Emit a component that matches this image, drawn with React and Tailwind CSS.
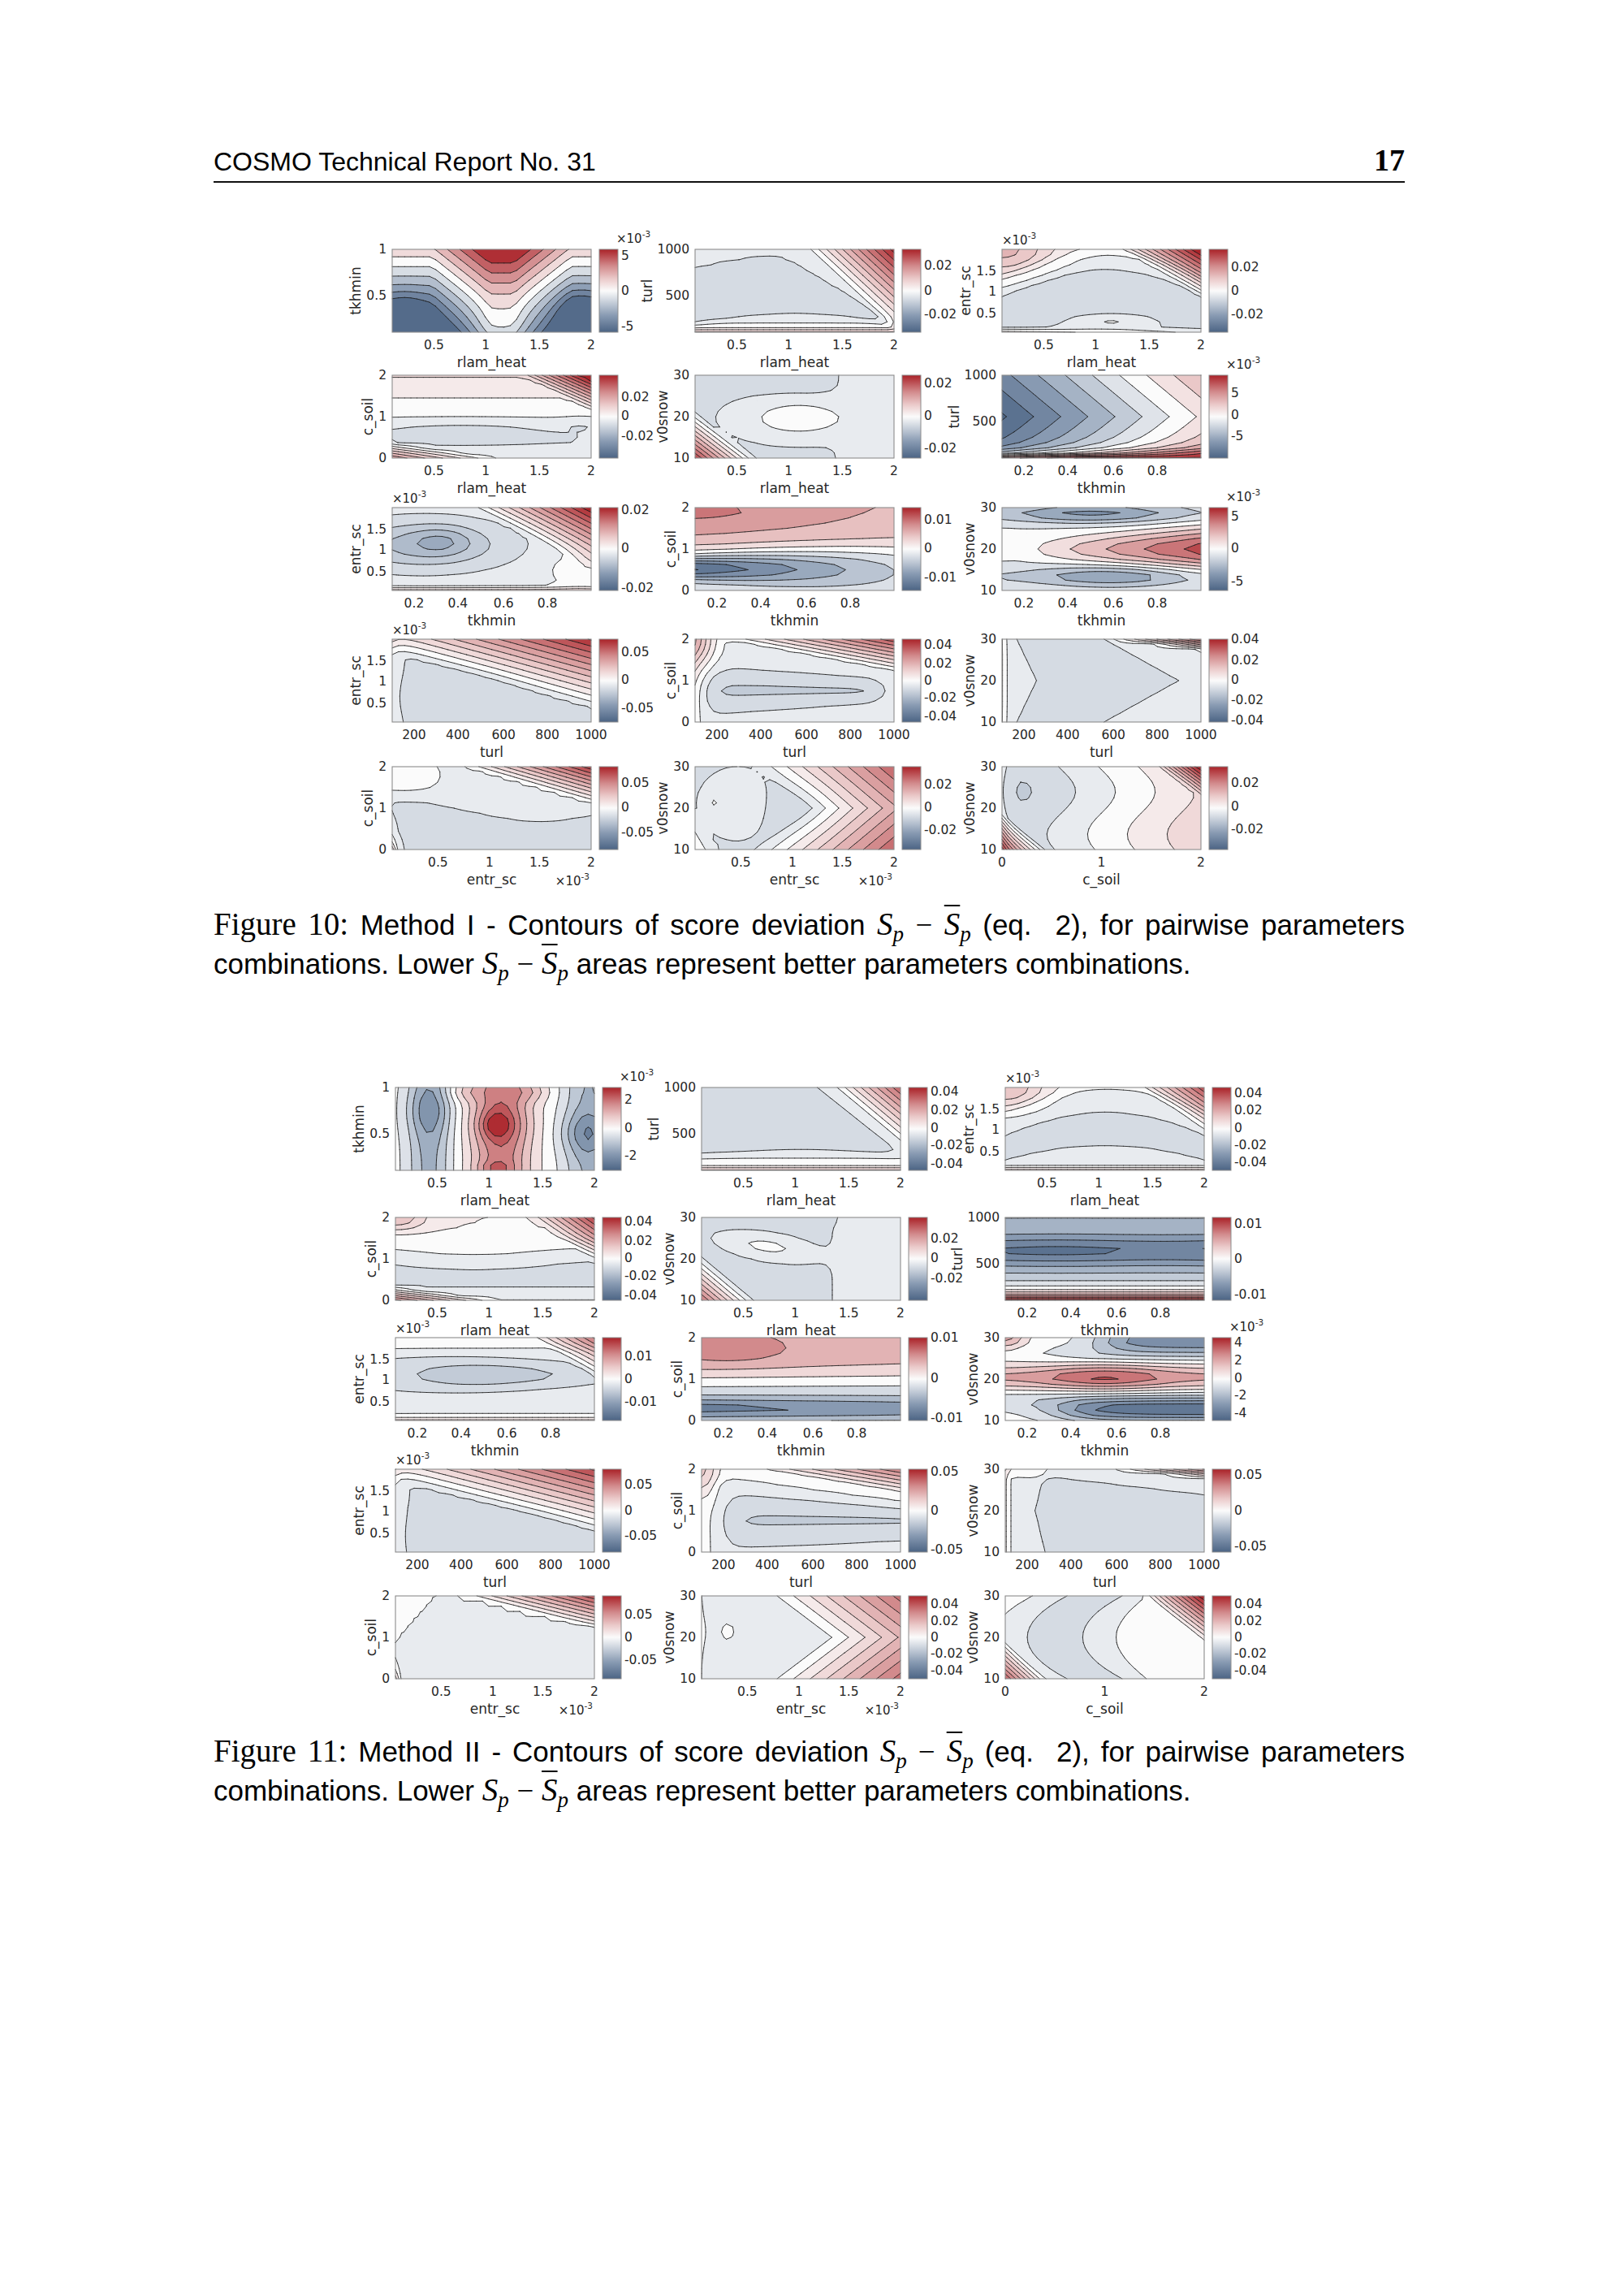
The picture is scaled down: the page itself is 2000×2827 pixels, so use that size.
import React, { useMemo } from 'react';

const P = (x) => (x > 0 ? x : 0);
const S = (x) => 1 / (1 + Math.exp(-x));
const A = Math.abs;
const E = Math.exp;
const G = (u, v, a, b, sa, sb) => E(-(((u - a) / sa) ** 2) - (((v - b) / sb) ** 2));

const STOPS = [
  [-1, [76, 100, 132]],
  [-0.6, [136, 154, 178]],
  [-0.3, [194, 203, 215]],
  [0, [251, 251, 251]],
  [0.3, [234, 200, 200]],
  [0.6, [210, 138, 140]],
  [1, [170, 34, 40]],
];

function cmap(t) {
  const x = Math.max(-1, Math.min(1, t));
  for (let i = 0; i < STOPS.length - 1; i++) {
    const [a, ca] = STOPS[i];
    const [b, cb] = STOPS[i + 1];
    if (x <= b) {
      const k = (x - a) / (b - a);
      const c = ca.map((v, j) => Math.round(v + (cb[j] - v) * k));
      return `rgb(${c[0]},${c[1]},${c[2]})`;
    }
  }
  return 'rgb(170,34,40)';
}

const GRAD = Array.from({ length: 21 }, (_, k) => (
  <stop key={k} offset={k / 20} stopColor={cmap(1 - k / 10)} />
));

function buildContours(f, step, W, H) {
  const nx = 32;
  const ny = 16;
  const N = nx + 1;
  const val = new Array(N * (ny + 1));
  for (let j = 0; j <= ny; j++) {
    for (let i = 0; i <= nx; i++) {
      let t = f(i / nx, j / ny);
      if (!(t > -0.999)) t = -0.999;
      if (t > 0.999) t = 0.999;
      val[j * N + i] = t;
    }
  }
  const X = (i) => (i * W / nx).toFixed(1);
  const Y = (j) => (H - j * H / ny).toFixed(1);
  const levels = [];
  for (let k = -40; k < 40; k++) {
    const Lv = (k + 0.5) * step;
    if (Lv > -0.999 && Lv < 0.999) levels.push(Lv);
  }
  const fills = [{ color: cmap(levels[0] - step / 2), d: `M0 0H${W}V${H}H0Z` }];
  let lines = '';
  const seg = (a, b) => {
    lines += `M${X(a[0])} ${Y(a[1])}L${X(b[0])} ${Y(b[1])}`;
  };
  levels.forEach((Lv, li) => {
    const hi = li + 1 < levels.length ? levels[li + 1] : Lv + step;
    let d = '';
    const rect = (r0, r1, j) => `M${X(r0)} ${Y(j)}H${X(r1)}V${Y(j + 1)}H${X(r0)}Z`;
    for (let j = 0; j < ny; j++) {
      let run = -1;
      for (let i = 0; i < nx; i++) {
        const c0 = val[j * N + i];
        const c1 = val[j * N + i + 1];
        const c2 = val[(j + 1) * N + i + 1];
        const c3 = val[(j + 1) * N + i];
        const h0 = c0 >= Lv, h1 = c1 >= Lv, h2 = c2 >= Lv, h3 = c3 >= Lv;
        if (h0 && h1 && h2 && h3) {
          if (run < 0) run = i;
          continue;
        }
        if (run >= 0) {
          d += rect(run, i, j);
          run = -1;
        }
        if (!h0 && !h1 && !h2 && !h3) continue;
        const Q = [
          [i, j, c0, h0],
          [i + 1, j, c1, h1],
          [i + 1, j + 1, c2, h2],
          [i, j + 1, c3, h3],
        ];
        const pts = [];
        const cr = [];
        for (let k = 0; k < 4; k++) {
          const p = Q[k];
          const q = Q[(k + 1) % 4];
          if (p[3]) pts.push([p[0], p[1]]);
          if (p[3] !== q[3]) {
            const t = (Lv - p[2]) / (q[2] - p[2]);
            const pt = [p[0] + (q[0] - p[0]) * t, p[1] + (q[1] - p[1]) * t];
            pts.push(pt);
            cr.push(pt);
          }
        }
        d += 'M' + pts.map((pt) => X(pt[0]) + ' ' + Y(pt[1])).join('L') + 'Z';
        if (cr.length === 2) seg(cr[0], cr[1]);
        else if (cr.length === 4) {
          const ctr = (c0 + c1 + c2 + c3) / 4;
          if ((ctr >= Lv) === h0) {
            seg(cr[0], cr[1]);
            seg(cr[2], cr[3]);
          } else {
            seg(cr[3], cr[0]);
            seg(cr[1], cr[2]);
          }
        }
      }
      if (run >= 0) d += rect(run, nx, j);
    }
    fills.push({ color: cmap((Lv + hi) / 2), d });
  });
  return { fills, lines };
}

const XAX = {
  rlam: { label: 'rlam_heat', ticks: [['0.5', 0.21], ['1', 0.47], ['1.5', 0.74], ['2', 1]] },
  tkh: { label: 'tkhmin', ticks: [['0.2', 0.11], ['0.4', 0.33], ['0.6', 0.56], ['0.8', 0.78]] },
  turl: { label: 'turl', ticks: [['200', 0.11], ['400', 0.33], ['600', 0.56], ['800', 0.78], ['1000', 1]] },
  entr: { label: 'entr_sc', ticks: [['0.5', 0.23], ['1', 0.49], ['1.5', 0.74], ['2', 1]], exp: true },
  csoil: { label: 'c_soil', ticks: [['0', 0], ['1', 0.5], ['2', 1]] },
};
const YAX = {
  tkh: { label: 'tkhmin', ticks: [['0.5', 0.44], ['1', 1]] },
  turl: { label: 'turl', ticks: [['500', 0.44], ['1000', 1]] },
  entr: { label: 'entr_sc', ticks: [['0.5', 0.23], ['1', 0.49], ['1.5', 0.74]], exp: true },
  csoil: { label: 'c_soil', ticks: [['0', 0], ['1', 0.5], ['2', 1]] },
  v0: { label: 'v0snow', ticks: [['10', 0], ['20', 0.5], ['30', 1]] },
};

const CB3 = (a, p1, p2, p3) => [[a, p1], ['0', p2], ['-' + a, p3]];
const CB5 = (a, b, p) => [[a, p[0]], [b, p[1]], ['0', p[2]], ['-' + b, p[3]], ['-' + a, p[4]]];

const FIG10 = [
  {
    x: XAX.rlam, y: YAX.tkh, step: 0.19, cbExp: true, cb: CB3('5', 0.08, 0.5, 0.93),
    f: (u, v) => {
      const g = 0.3 + Math.min(0.55, 1.9 * P(A(u - 0.55) - 0.06));
      return 1.6 * (v - g) + 0.3 * G(u, v, 0.55, 0, 0.16, 0.3) - 0.35 * G(u, v, 0.06, 0.2, 0.12, 0.25) - 0.35 * G(u, v, 0.95, 0.25, 0.12, 0.25);
    },
  },
  {
    x: XAX.rlam, y: YAX.turl, step: 0.1, cb: CB3('0.02', 0.2, 0.5, 0.78),
    f: (u, v) => {
      const D = 0.74 + 0.14 * Math.sin(Math.PI * Math.min(1, u * 1.25));
      const B = 0.1 + 0.16 * Math.sin(Math.PI * u);
      return -0.13 - 0.1 * S((D - v) / 0.02) * S((1.06 - u - 0.7 * v) / 0.015) * S((v - B) / 0.02) + 2.5 * P(u + 0.45 * v - 1.0) + 0.3 * E(-v / 0.04) + 0.1 * S((0.12 - v) / 0.03);
    },
  },
  {
    x: XAX.rlam, y: YAX.entr, step: 0.1, cb: CB3('0.02', 0.22, 0.5, 0.78),
    f: (u, v) => {
      const ar = 0.45 + 0.32 * (1 - 4 * (u - 0.5) ** 2);
      return -0.2 + 0.12 * S((v - ar) / 0.03) + 0.12 * S((v - ar - 0.2) / 0.03) + 0.1 * G(u, v, 0.55, 0.13, 0.28, 0.11) + 0.1 * G(u, v, 0.55, 0.14, 0.06, 0.025) + 2.6 * P(u + 0.7 * v - 1.3) + 0.35 * G(u, v, 0, 1, 0.25, 0.3) + 0.3 * E(-v / 0.03) * (1 - 0.6 * u);
    },
  },
  {
    x: XAX.rlam, y: YAX.csoil, step: 0.1, cb: CB3('0.02', 0.26, 0.49, 0.74),
    f: (u, v) => 0.4 * (v - 0.6) - 0.1 * G(u, v, 0.35, 0.32, 0.45, 0.12) + 0.14 * S((0.12 - v) / 0.04) + 2.8 * P(u + 0.8 * v - 1.45) + 3.2 * P(0.2 - 0.35 * u - v) - 0.06 * G(u, v, 0.95, 0.4, 0.1, 0.08),
  },
  {
    x: XAX.rlam, y: YAX.v0, step: 0.1, cb: CB3('0.02', 0.1, 0.49, 0.88),
    f: (u, v) => -0.16 + 0.2 * G(u, v, 0.52, 0.48, 0.24, 0.2) - 0.08 * S((v - 0.85 + 0.3 * (u - 0.4) ** 2) / 0.03) * S((0.62 - u) / 0.03) + 0.1 * S((u - 0.82) / 0.05) + 3.4 * P(0.3 - u - 0.55 * v),
  },
  {
    x: XAX.tkh, y: YAX.turl, step: 0.15, cbExp: true, cb: CB3('5', 0.22, 0.48, 0.74),
    f: (u, v) => -1.0 + 1.1 * (u + 0.5 * A(v - 0.5)) + 1.3 * E(-v / 0.06),
  },
  {
    x: XAX.tkh, y: YAX.entr, step: 0.1, cb: CB3('0.02', 0.03, 0.49, 0.97),
    f: (u, v) => -0.1 - 0.3 * G(u, v, 0.15, 0.55, 0.4, 0.28) - 0.12 * G(u, v, 0.25, 0.6, 0.14, 0.16) + 1.9 * P(u + 0.8 * v - 1.2) + 0.3 * E(-v / 0.03) + 0.14 * G(u, v, 0.95, 0.25, 0.15, 0.2),
  },
  {
    x: XAX.tkh, y: YAX.csoil, step: 0.17, cb: CB3('0.01', 0.15, 0.49, 0.84),
    f: (u, v) => 0.58 * S((v - 0.52) / 0.1) * (1 - 0.25 * u) + 0.08 * (v - 0.5) + 0.12 * G(u, v, 0.05, 0.95, 0.3, 0.1) - 0.92 * E(-(((v - 0.27) / (0.14 + 0.12 * u)) ** 2)) * (1 - 0.78 * u) - 0.06,
  },
  {
    x: XAX.tkh, y: YAX.v0, step: 0.17, cbExp: true, cb: CB3('5', 0.11, 0.49, 0.89),
    f: (u, v) => 0.95 * P(u - 0.08) ** 0.85 * E(-(((v - 0.5) / (0.12 + 0.12 * u)) ** 2)) - 0.6 * E(-(((v - 0.93) / 0.12) ** 2)) * (0.3 + 0.7 * E(-(((u - 0.45) / 0.4) ** 2))) - 0.55 * E(-(((v - 0.17) / 0.13) ** 2)) * (0.35 + 0.65 * E(-(((u - 0.55) / 0.35) ** 2))) - 0.05,
  },
  {
    x: XAX.turl, y: YAX.entr, step: 0.1, cb: CB3('0.05', 0.16, 0.49, 0.83),
    f: (u, v) => -0.17 + 1.35 * P(v + 0.66 * u - 0.82) + 0.12 * E(-u / 0.04) - 0.06 * G(u, v, 0.3, 0.3, 0.3, 0.3),
  },
  {
    x: XAX.turl, y: YAX.csoil, step: 0.1, cb: CB5('0.04', '0.02', [0.07, 0.29, 0.5, 0.71, 0.93]),
    f: (u, v) => -0.1 - 0.16 * E(-(((v - 0.38) / (0.26 * (1 - 0.6 * u) + 0.02)) ** 2)) * S((u - 0.06) / 0.02) * S((0.93 - u) / 0.03) + 2.3 * P(v + 0.45 * u - 1.05) + 0.45 * G(u, v, 0, 1, 0.1, 0.35) + 0.12 * E(-u / 0.03),
  },
  {
    x: XAX.turl, y: YAX.v0, step: 0.1, cb: CB5('0.04', '0.02', [0.0, 0.25, 0.49, 0.74, 0.98]),
    f: (u, v) => -0.23 + 0.14 * S((u + 0.75 * A(v - 0.5) - 0.88) / 0.025) + 0.14 * S((0.18 - 0.2 * A(v - 0.5) - u) / 0.02) + 0.15 * E(-u / 0.015) + 6 * P(v + 0.3 * u - 1.16),
  },
  {
    x: XAX.entr, y: YAX.csoil, step: 0.1, cb: CB3('0.05', 0.2, 0.49, 0.79),
    f: (u, v) => -0.17 + 0.1 * S((v - 0.5 - 0.1 * Math.sin(u * 5 + 1) - 0.25 * P(0.3 - u)) / 0.04) + 0.1 * G(u, v, 0.05, 0.9, 0.15, 0.2) + 2.2 * P(v + 0.7 * u - 1.25) + 0.4 * E(-u / 0.02) * E(-v / 0.15),
  },
  {
    x: XAX.entr, y: YAX.v0, step: 0.1, cb: CB3('0.02', 0.22, 0.49, 0.76),
    f: (u, v) => -0.16 + 0.1 * G(u, v, 0.22, 0.55, 0.14, 0.3) + 0.1 * G(u, v, 0.1, 0.57, 0.02, 0.07) + 1.3 * P(u + 0.5 * A(v - 0.5) - 0.55) - 0.05 * G(u, v, 0.5, 0.5, 0.2, 0.3) + 1.6 * P(0.12 - u - 0.25 * v),
  },
  {
    x: XAX.csoil, y: YAX.v0, step: 0.1, cb: CB3('0.02', 0.2, 0.48, 0.75),
    f: (u, v) => -0.3 + 0.5 * (u + 0.07 * Math.sin(6 * v + 0.5)) + 0.2 * E(-u / 0.05) + 4 * P(u + 0.6 * v - 1.38) + 4.5 * P(0.22 - u - 0.5 * v),
  },
];

const FIG11 = [
  {
    x: XAX.rlam, y: YAX.tkh, step: 0.16, cbExp: true, cb: CB3('2', 0.15, 0.49, 0.82),
    f: (u, v) => 0.85 * E(-(((u - 0.53) / 0.15) ** 2)) * (0.75 + 0.25 * E(-(((v - 0.55) / 0.25) ** 2))) + 0.25 * G(u, v, 0.5, 0.55, 0.07, 0.15) + 0.2 * G(u, v, 0.5, 0.03, 0.08, 0.08) - 0.7 * E(-(((u - 0.17) / 0.11) ** 2)) * (0.65 + 0.35 * E(-(((v - 0.72) / 0.3) ** 2))) - 0.75 * E(-(((u - 0.97) / 0.13) ** 2)) * (0.55 + 0.45 * E(-(((v - 0.45) / 0.25) ** 2))) + 0.2 * G(u, v, 0.35, 0.95, 0.1, 0.12) + 0.2 * G(u, v, 0.68, 0.95, 0.1, 0.12),
  },
  {
    x: XAX.rlam, y: YAX.turl, step: 0.1, cb: CB5('0.04', '0.02', [0.05, 0.27, 0.49, 0.7, 0.92]),
    f: (u, v) => -0.13 - 0.1 * S((1.08 - u - 0.53 * v) / 0.02) * S((v - 0.2 - 0.07 * Math.sin(Math.PI * u)) / 0.02) + 2.5 * P(u + 0.5 * v - 1.15) + 0.3 * E(-v / 0.04) + 0.1 * S((0.18 - v) / 0.03),
  },
  {
    x: XAX.rlam, y: YAX.entr, step: 0.1, cb: CB5('0.04', '0.02', [0.07, 0.27, 0.49, 0.7, 0.9]),
    f: (u, v) => {
      const q = 1 - 4 * (u - 0.5) ** 2;
      const a1 = 0.42 + 0.28 * q;
      const a2 = 0.12 + 0.18 * q;
      const a3 = 0.7 + 0.28 * q;
      return -0.1 - 0.1 * S((a1 - v) / 0.025) * S((v - a2) / 0.025) + 0.1 * S((v - a3) / 0.03) + 2.6 * P(u + 0.6 * v - 1.28) + 0.35 * G(u, v, 0, 1, 0.2, 0.25) + 0.3 * E(-v / 0.03);
    },
  },
  {
    x: XAX.rlam, y: YAX.csoil, step: 0.1, cb: CB5('0.04', '0.02', [0.05, 0.28, 0.49, 0.71, 0.94]),
    f: (u, v) => -0.03 - 0.14 * S((0.52 - 0.06 * Math.sin(u * 4) - v) / 0.05) * S((v - 0.08) / 0.04) + 0.08 * S((v - 0.8 + 0.1 * u) / 0.03) + 2.6 * P(u + 0.6 * v - 1.28) + 3.5 * P(0.18 - 0.35 * u - v) + 0.3 * G(u, v, 0, 1, 0.15, 0.15),
  },
  {
    x: XAX.rlam, y: YAX.v0, step: 0.1, cb: CB3('0.02', 0.25, 0.49, 0.74),
    f: (u, v) => {
      const du = u - 0.33;
      const dv = v - 0.65;
      const p = du * 0.86 - dv * 0.51;
      const q = du * 0.51 + dv * 0.86;
      const el = E(-((p / 0.22) ** 2) - ((q / 0.12) ** 2));
      return -0.17 + 0.15 * el + 0.09 * S((u - 0.72) / 0.05) + 3.2 * P(0.26 - u - 0.5 * v) - 0.05 * G(u, v, 0.3, 1, 0.3, 0.1);
    },
  },
  {
    x: XAX.tkh, y: YAX.turl, step: 0.15, cb: CB3('0.01', 0.08, 0.5, 0.93),
    f: (u, v) => -0.45 - 0.45 * E(-(((v - 0.6) / 0.18) ** 2)) * (1 + 0.06 * Math.sin(u * 6)) + 1.5 * E(-v / 0.12) + 0.08 * v,
  },
  {
    x: XAX.tkh, y: YAX.entr, step: 0.1, cb: CB3('0.01', 0.23, 0.5, 0.77),
    f: (u, v) => -0.07 - 0.2 * E(-(((u - 0.45) / 0.48) ** 2) - (((v - 0.55) / (0.2 * (1 - 0.4 * u))) ** 2)) - 0.06 * S((v - 0.3) / 0.05) * S((0.85 - v) / 0.05) + 2.2 * P(u + 0.6 * v - 1.3) + 0.12 * S((v - 0.88) / 0.04) * (1 - u * 0.3) + 0.25 * E(-v / 0.03),
  },
  {
    x: XAX.tkh, y: YAX.csoil, step: 0.2, cb: CB3('0.01', 0.0, 0.49, 0.97),
    f: (u, v) => 0.5 * S((v - 0.55) / 0.09) * (1 - 0.2 * u) + 0.2 * G(u, v, 0.15, 0.85, 0.25, 0.15) - 0.3 * S((0.45 - v) / 0.1) - 0.5 * E(-(((v - 0.15) / 0.12) ** 2)) * (1 - 0.3 * u) + 0.08 * E(-v / 0.03),
  },
  {
    x: XAX.tkh, y: YAX.v0, step: 0.17, cbExp: true, cb: CB5('4', '2', [0.06, 0.27, 0.49, 0.7, 0.91]),
    f: (u, v) => 0.8 * E(-(((v - 0.52) / 0.15) ** 2)) * (0.55 + 0.45 * E(-(((u - 0.5) / 0.3) ** 2))) - 0.75 * E(-(((v - 0.97) / 0.14) ** 2)) * S((u - 0.5) / 0.08) - 0.85 * E(-(((v - 0.12) / 0.14) ** 2)) * S((u - 0.3) / 0.1) - 0.2 * E(-(((v - 0.25) / 0.12) ** 2)) + 0.5 * G(u, v, 0, 1, 0.1, 0.12) - 0.2 * E(-(((v - 0.8) / 0.1) ** 2)) * S((u - 0.2) / 0.1),
  },
  {
    x: XAX.turl, y: YAX.entr, step: 0.1, cb: CB3('0.05', 0.19, 0.5, 0.8),
    f: (u, v) => -0.17 + 1.35 * P(v + 0.62 * u - 0.85) + 0.12 * E(-u / 0.04) - 0.06 * G(u, v, 0.5, 0.2, 0.4, 0.3),
  },
  {
    x: XAX.turl, y: YAX.csoil, step: 0.1, cb: CB3('0.05', 0.03, 0.5, 0.97),
    f: (u, v) => -0.02 - 0.12 * S((0.9 - 0.35 * u - v) / 0.04) * S((u - 0.07) / 0.02) - 0.12 * E(-(((v - 0.38) / (0.22 * (1 - 0.3 * u))) ** 2)) * S((u - 0.15) / 0.03) + 2.2 * P(v + 0.4 * u - 1.1) + 0.3 * G(u, v, 0, 1, 0.08, 0.3),
  },
  {
    x: XAX.turl, y: YAX.v0, step: 0.1, cb: CB3('0.05', 0.07, 0.5, 0.93),
    f: (u, v) => -0.22 + 0.14 * S((0.15 - u + 0.1 * A(v - 0.5)) / 0.02) + 0.12 * S((v + 0.28 * u - 0.96) / 0.025) + 0.15 * E(-u / 0.015) + 5.5 * P(v + 0.25 * u - 1.13),
  },
  {
    x: XAX.entr, y: YAX.csoil, step: 0.1, cb: CB3('0.05', 0.23, 0.5, 0.77),
    f: (u, v) => -0.15 + 0.1 * S((v - 0.45 - 0.35 * P(u - 0.2) * (1 - u * 0.4) + 0.15 * P(0.2 - u)) / 0.04) + 2.2 * P(v + 0.6 * u - 1.2) + 0.35 * E(-u / 0.02) * E(-v / 0.2),
  },
  {
    x: XAX.entr, y: YAX.v0, step: 0.1, cb: CB5('0.04', '0.02', [0.1, 0.3, 0.5, 0.7, 0.9]),
    f: (u, v) => -0.14 + 0.1 * G(u, v, 0.13, 0.57, 0.1, 0.3) + 1.2 * P(u + 0.55 * A(v - 0.5) - 0.58) + 1.5 * P(0.06 - u),
  },
  {
    x: XAX.csoil, y: YAX.v0, step: 0.1, cb: CB5('0.04', '0.02', [0.1, 0.3, 0.5, 0.7, 0.9]),
    f: (u, v) => {
      const c = 0.25 + 0.8 * (v - 0.5) ** 2;
      return -0.04 - 0.2 * E(-(((u - c) / 0.18) ** 2)) + 3.5 * P(u + 0.55 * v - 1.25) + 4 * P(0.2 - u - 0.45 * v) + 0.05 * S((u - 0.75) / 0.05);
    },
  },
];

const TXT = '#262626';
const FS = 15.5;

const tw = (s) => s.split('').reduce((a, ch) => a + (ch === '.' ? 0.318 : ch === '-' ? 0.361 : 0.636), 0) * FS;

function Exp({ x, y, anchor = 'start' }) {
  return (
    <text x={x} y={y} fontSize="15" fill={TXT} textAnchor={anchor}>
      ×10<tspan fontSize="10.5" dy="-7">-3</tspan>
    </text>
  );
}

function Panel({ p, w, gid }) {
  const L = 92;
  const T = 24;
  const W = 245;
  const H = 102;
  const data = useMemo(() => buildContours(p.f, p.step, W, H), [p]);
  const cbx = L + W + 10;
  const cbw = 23;
  const maxW = Math.max(...p.y.ticks.map(([s]) => tw(s)));
  const ylx = L - 7 - maxW - 13;
  return (
    <svg width={w} height={180} className="block shrink-0 overflow-visible" fontFamily="'DejaVu Sans', sans-serif">
      <defs>
        <linearGradient id={gid} x1="0" y1="0" x2="0" y2="1">{GRAD}</linearGradient>
      </defs>
      <g transform={`translate(${L} ${T})`}>
        {data.fills.map((fl, i) => (
          <path key={i} d={fl.d} fill={fl.color} />
        ))}
        <path d={data.lines} fill="none" stroke="#1c1c1c" strokeWidth="0.85" strokeLinecap="round" />
        <rect x="0" y="0" width={W} height={H} fill="none" stroke="#8c8c8c" strokeWidth="1.1" />
      </g>
      <rect x={cbx} y={T} width={cbw} height={H} fill={`url(#${gid})`} stroke="#8c8c8c" strokeWidth="1" />
      {p.cb.map(([s, fr]) => (
        <text key={s} x={cbx + cbw + 4} y={T + H * fr} fontSize={FS} fill={TXT} dominantBaseline="central">
          {s}
        </text>
      ))}
      {p.cbExp && <Exp x={cbx + cbw - 2} y={T - 8} />}
      {p.y.ticks.map(([s, fr]) => (
        <text key={s} x={L - 7} y={T + H * (1 - fr)} fontSize={FS} textAnchor="end" dominantBaseline="central" fill={TXT}>
          {s}
        </text>
      ))}
      <text transform={`translate(${ylx} ${T + H / 2}) rotate(-90)`} fontSize="17" textAnchor="middle" dominantBaseline="central" fill={TXT}>
        {p.y.label}
      </text>
      {p.y.exp && <Exp x={L} y={T - 6} />}
      {p.x.ticks.map(([s, fr]) => (
        <text key={s} x={L + W * fr} y={T + H + 16} fontSize={FS} textAnchor="middle" dominantBaseline="central" fill={TXT}>
          {s}
        </text>
      ))}
      <text x={L + W / 2} y={T + H + 37} fontSize="17" textAnchor="middle" dominantBaseline="central" fill={TXT}>
        {p.x.label}
      </text>
      {p.x.exp && <Exp x={L + W - 2} y={T + H + 44} anchor="end" />}
    </svg>
  );
}

const LAYOUT10 = {
  ml: 'ml-[128px]',
  rows: ['h-[155px]', 'h-[163px]', 'h-[162px]', 'h-[157px]', 'h-[180px]'],
  cols: [373, 378, 420],
};
const LAYOUT11 = {
  ml: 'ml-[132px]',
  rows: ['h-[160px]', 'h-[148px]', 'h-[162px]', 'h-[156px]', 'h-[180px]'],
  cols: [377, 374, 420],
};

function Figure({ panels, layout, id }) {
  return (
    <div className={`flex flex-col ${layout.ml}`}>
      {layout.rows.map((rh, r) => (
        <div key={r} className={`flex items-start ${rh}`}>
          {[0, 1, 2].map((c) => (
            <Panel key={c} p={panels[r * 3 + c]} w={layout.cols[c]} gid={`${id}-${r}-${c}`} />
          ))}
        </div>
      ))}
    </div>
  );
}

function Sp({ bar }) {
  return (
    <span className="font-['Liberation_Serif',serif] italic text-[39px]">
      <span className={bar ? 'overline decoration-[1.5px]' : ''}>S</span>
      <span className="relative top-[8px] text-[27px]">p</span>
    </span>
  );
}

function Caption({ num, method, mt }) {
  return (
    <div className={`${mt} font-['Liberation_Sans',Arial,sans-serif] text-[35px] leading-[44px] text-black`}>
      <div className="text-justify [text-align-last:justify]">
        <span className="font-['Liberation_Serif',serif] text-[39px]">Figure {num}:</span> Method {method} - Contours of score deviation{' '}
        <Sp /> <span className="font-['Liberation_Serif',serif] text-[37px]">−</span> <Sp bar /> (eq.&nbsp;&nbsp;2), for pairwise parameters
      </div>
      <div>
        combinations. Lower <Sp /> <span className="font-['Liberation_Serif',serif] text-[37px]">−</span> <Sp bar /> areas represent better parameters combinations.
      </div>
    </div>
  );
}

export default function App() {
  return (
    <div className="w-[2000px] min-h-[2827px] bg-white text-black">
      <div className="ml-[263px] w-[1467px] pt-[181px]">
        <div className="flex justify-between items-baseline">
          <span className="font-['Liberation_Sans',Arial,sans-serif] text-[32px] leading-[32px]">COSMO Technical Report No. 31</span>
          <span className="font-['Liberation_Serif',serif] font-bold text-[38px] leading-[32px]">17</span>
        </div>
        <div className="mt-[8px] h-[1.5px] bg-[#111]" />
        <div className="mt-[58px]">
          <Figure panels={FIG10} layout={LAYOUT10} id="f10" />
        </div>
        <Caption num="10" method="I" mt="mt-[16px]" />
        <div className="mt-[103px]">
          <Figure panels={FIG11} layout={LAYOUT11} id="f11" />
        </div>
        <Caption num="11" method="II" mt="mt-[13px]" />
      </div>
    </div>
  );
}
